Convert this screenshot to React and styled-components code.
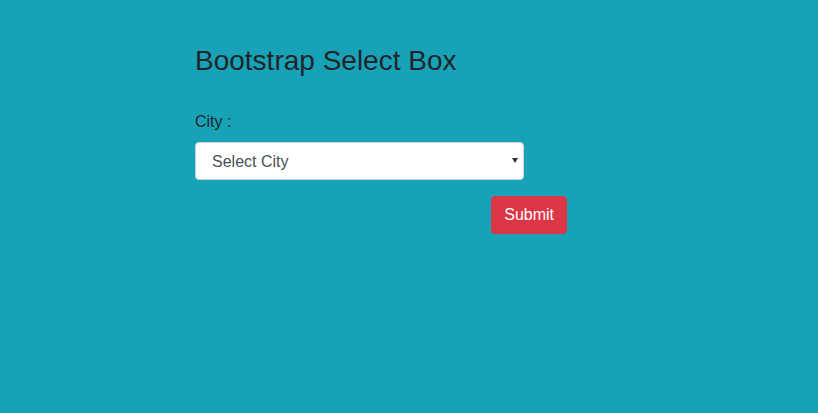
import React from "react";
import styled, { createGlobalStyle } from "styled-components";

const Global = createGlobalStyle`
  html, body { margin: 0; padding: 0; }
  body {
    background: #17a2b8;
    font-family: "Liberation Sans", Arial, sans-serif;
    color: #212529;
    min-height: 100vh;
  }
`;

const Page = styled.div`
  min-height: 100vh;
  box-sizing: border-box;
  padding: 44px 0 0 195px;
`;

const Form = styled.form`
  width: 372px;
  display: flex;
  flex-direction: column;
`;

const Title = styled.h3`
  margin: 0 0 32px;
  font-size: 28px;
  line-height: 34px;
  font-weight: 400;
  color: #212529;
`;

const Label = styled.label`
  display: block;
  font-size: 16px;
  line-height: 24px;
  margin-bottom: 8px;
`;

const SelectWrap = styled.div`
  position: relative;
  width: 329px;
`;

const Select = styled.select`
  appearance: none;
  -webkit-appearance: none;
  width: 100%;
  height: 38px;
  box-sizing: border-box;
  border: 1px solid #ced4da;
  border-radius: 4px;
  background: #fff;
  padding: 0 24px 0 16px;
  font-family: "Liberation Sans", Arial, sans-serif;
  font-size: 16px;
  color: #495057;
  outline: none;
`;

const Arrow = styled.svg`
  position: absolute;
  right: 6px;
  top: 16px;
  pointer-events: none;
`;

const Actions = styled.div`
  display: flex;
  justify-content: flex-end;
  margin-top: 16px;
`;

const Button = styled.button`
  height: 38px;
  padding: 0 12px;
  border: 1px solid #dc3545;
  border-radius: 4px;
  background: #dc3545;
  color: #fff;
  font-family: "Liberation Sans", Arial, sans-serif;
  font-size: 16px;
  line-height: 24px;
  cursor: pointer;
`;

export default function App() {
  return (
    <>
      <Global />
      <Page>
        <Form onSubmit={(e) => e.preventDefault()}>
          <Title>Bootstrap Select Box</Title>
          <Label htmlFor="city">City :</Label>
          <SelectWrap>
            <Select id="city" defaultValue="">
              <option value="">Select City</option>
              <option value="1">Mumbai</option>
              <option value="2">Delhi</option>
            </Select>
            <Arrow width="6" height="5" viewBox="0 0 6 5">
              <path d="M0 0 H6 L3 5 Z" fill="#333" />
            </Arrow>
          </SelectWrap>
          <Actions>
            <Button type="submit">Submit</Button>
          </Actions>
        </Form>
      </Page>
    </>
  );
}
